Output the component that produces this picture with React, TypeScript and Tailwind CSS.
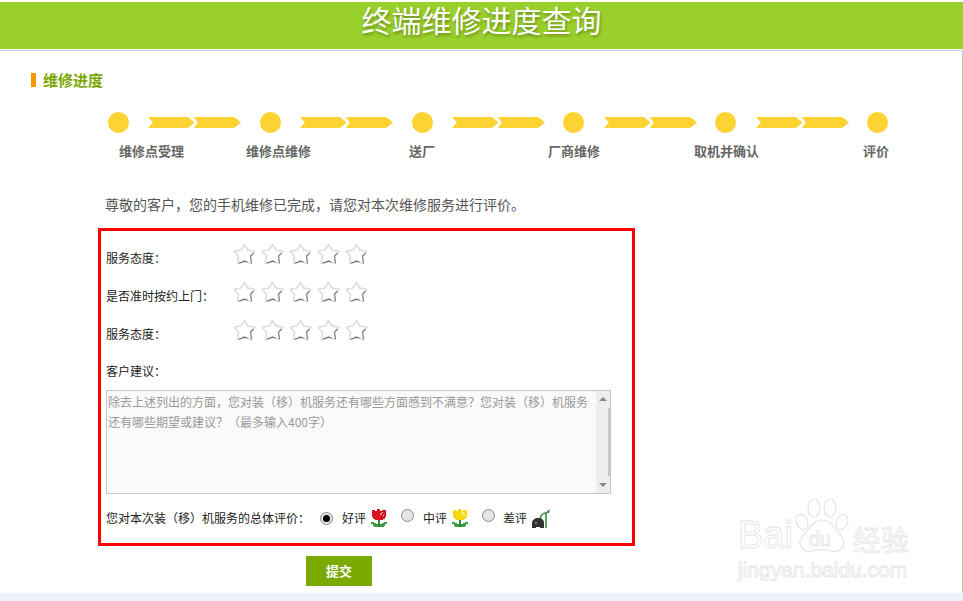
import React from 'react';

const font = "font-['Noto_Sans_CJK_SC','Liberation_Sans',sans-serif]";

const labels = [
  { text: '维修点受理', ml: 'ml-0' },
  { text: '维修点维修', ml: 'ml-[62px]' },
  { text: '送厂', ml: 'ml-[98px]' },
  { text: '厂商维修', ml: 'ml-[113px]' },
  { text: '取机并确认', ml: 'ml-[94px]' },
  { text: '评价', ml: 'ml-[104px]' },
];

function Dot() {
  return <div className="h-[21px] w-[21px] shrink-0 rounded-full bg-[#fdd233]" />;
}

function Arrows() {
  return (
    <svg width="96" height="11" viewBox="0 0 96 11" className="shrink-0">
      <polygon points="2,0 42,0 48.5,5.5 42,11 2,11 7,5.5" fill="#fdd233" />
      <polygon points="48,0 88,0 95,5.5 88,11 48,11 51.5,5.5" fill="#fdd233" />
    </svg>
  );
}

function Star() {
  return (
    <svg width="23" height="23" viewBox="0 0 23 23" className="shrink-0">
      <path
        d="M11.5 1.5 L15 7 L21.8 8.2 L17.4 13.2 L18.6 20.8 L11.5 18 L4.4 20.8 L5.6 13.2 L1.2 8.2 L8 7 Z"
        fill="#fff"
        stroke="#dcdcdc"
        strokeWidth="1.5"
        strokeLinejoin="round"
      />
      <path d="M20.6 10 L17.5 13.3 L18.6 20.4" fill="none" stroke="#858585" strokeWidth="1.2" />
      <path d="M6 20.2 L11.5 18.1 L14.5 19.2" fill="none" stroke="#707070" strokeWidth="1.2" />
    </svg>
  );
}

function StarRow({ label }: { label: string }) {
  return (
    <div className="flex h-[23px] items-center">
      <div className="w-[127px] pt-[6px] text-xs text-[#222]">{label}</div>
      <div className="flex gap-[5px]">
        <Star />
        <Star />
        <Star />
        <Star />
        <Star />
      </div>
    </div>
  );
}

function Radio({ checked }: { checked?: boolean }) {
  return (
    <span className="flex h-[13px] w-[13px] shrink-0 items-center justify-center rounded-full border border-[#8a8a8a] bg-[#e4e4e4]">
      {checked && <span className="h-[7px] w-[7px] rounded-full bg-black" />}
    </span>
  );
}

function Tulip({ color, light }: { color: string; light: string }) {
  return (
    <svg width="16" height="19" viewBox="0 0 16 19" shapeRendering="crispEdges" className="shrink-0">
      <path d="M1 1h3v1h2V0h3v2h2V1h4v7h-1v2h-2v1H4v-1H2V8H1z" fill={color} />
      <rect x="9" y="4" width="2" height="2" fill={light} />
      <rect x="11" y="3" width="1" height="1" fill="#fff" />
      <rect x="12" y="6" width="1" height="1" fill="#fff" />
      <rect x="7" y="11" width="2" height="7" fill="#2f8a38" />
      <path d="M0 13h3v1h2v1h2v3H3v-1H2v-2H0zM16 13h-3v1h-2v1H9v3h4v-1h1v-2h2z" fill="#3d9a45" />
    </svg>
  );
}

function Wilted() {
  return (
    <svg width="18" height="19" viewBox="0 0 18 19" className="shrink-0">
      <path d="M8 10 C9 6 11 4 14 4 V19" fill="none" stroke="#3d8f3f" strokeWidth="1.6" />
      <path d="M13 4 L18 0 L17 4 Z" fill="#3d8f3f" />
      <path d="M0 19 V14 C0 11 3 9 6 9 C10 9 12 11 12 14 V19 H8 V18 H4 V19 Z" fill="#333" />
      <rect x="3" y="13" width="2" height="2" fill="#777" />
    </svg>
  );
}

function Watermark() {
  return (
    <div className="absolute bottom-[12px] left-[738px] w-[176px] select-none font-['Liberation_Sans',sans-serif] text-transparent [-webkit-text-stroke:0.8px_#e4e4e4]">
      <div className="relative h-[62px]">
        <span className="absolute bottom-[5px] left-0 text-[38px] leading-none">Bai</span>
        <svg width="56" height="62" viewBox="0 0 56 62" fill="#fff" stroke="#e4e4e4" strokeWidth="1.2" className="absolute left-[56px] top-0">
          <ellipse cx="20" cy="11" rx="6" ry="9" />
          <ellipse cx="36" cy="11" rx="6" ry="9" />
          <ellipse cx="8" cy="25" rx="5.5" ry="8" transform="rotate(-25 8 25)" />
          <ellipse cx="48" cy="25" rx="5.5" ry="8" transform="rotate(25 48 25)" />
          <path d="M28 23 C38 23 42 34 48 40 C54 48 46 56 38 54 C32 52 24 52 18 54 C10 56 2 48 8 40 C14 34 18 23 28 23 Z" />
        </svg>
        <span className="absolute bottom-[10px] left-[71px] text-[20px] leading-none">du</span>
        <span className={`absolute bottom-[6px] left-[115px] ${font} text-[28px] leading-none`}>经验</span>
      </div>
      <div className="text-[21px] leading-[22px]">jingyan.baidu.com</div>
    </div>
  );
}

export default function App() {
  return (
    <div className={`flex h-[601px] w-[963px] flex-col overflow-hidden bg-white pt-[2px] ${font}`}>
      <header className="flex h-[47px] shrink-0 items-start justify-center bg-[#9ad02b]">
        <h1 className="text-[30px] leading-[35px] text-white [text-shadow:1px_2px_3px_rgba(70,90,20,0.55)]">
          终端维修进度查询
        </h1>
      </header>
      <div className="mt-px h-px shrink-0 bg-[#cfcfcf]" />

      <main className="relative flex-1 border-r border-[#c4c4c4]">
        <div className="ml-[31px] mt-[19px] flex h-[20px] items-center">
          <span className="h-[14px] w-[5px] bg-[#ff9600]" />
          <h2 className="ml-[7px] text-[15px] font-bold text-[#7aa800]">维修进度</h2>
        </div>

        <div className="ml-[108px] mt-[22px] flex w-[780px] items-center justify-between">
          <Dot />
          <Arrows />
          <Dot />
          <Arrows />
          <Dot />
          <Arrows />
          <Dot />
          <Arrows />
          <Dot />
          <Arrows />
          <Dot />
        </div>

        <div className="ml-[119px] mt-[9px] flex h-[16px] items-center text-[13px] font-bold leading-none text-[#666]">
          {labels.map((l) => (
            <span key={l.text} className={l.ml}>
              {l.text}
            </span>
          ))}
        </div>

        <p className="ml-[105px] mt-[36px] text-sm leading-[20px] text-[#555]">
          尊敬的客户，您的手机维修已完成，请您对本次维修服务进行评价。
        </p>

        <form className="ml-[98px] mt-[14px] h-[318px] w-[537px] border-[3px] border-[#ff0000] pl-[5px] pt-[12px]">
          <div className="flex flex-col gap-[15px]">
            <StarRow label="服务态度：" />
            <StarRow label="是否准时按约上门：" />
            <StarRow label="服务态度：" />
          </div>

          <div className="mt-[21px] text-xs leading-[16px] text-[#222]">客户建议：</div>

          <div className="mt-[11px] flex h-[104px] w-[505px] border border-[#c6c6c6] bg-[#fafafa]">
            <textarea
              className="min-w-0 flex-1 resize-none bg-transparent pl-[1px] pt-[1px] text-xs leading-[20px] outline-none placeholder:text-[#999]"
              placeholder="除去上述列出的方面，您对装（移）机服务还有哪些方面感到不满意？您对装（移）机服务还有哪些期望或建议？（最多输入400字）"
            />
            <div className="flex w-[14px] shrink-0 flex-col items-center bg-[#ededed] py-[6px]">
              <span className="h-0 w-0 border-x-[4px] border-b-[4px] border-x-transparent border-b-[#888]" />
              <span className="my-[7px] w-full flex-1 border-r-2 border-[#c8c8c8]" />
              <span className="h-0 w-0 border-x-[4px] border-t-[4px] border-x-transparent border-t-[#888]" />
            </div>
          </div>

          <div className="mt-[12px] flex h-[24px] items-center text-xs text-[#222]">
            <span className="w-[214px]">您对本次装（移）机服务的总体评价：</span>
            <Radio checked />
            <span className="ml-[9px]">好评</span>
            <span className="ml-[5px]">
              <Tulip color="#d8141e" light="#ff8a8a" />
            </span>
            <span className="mb-[6px] ml-[14px]">
              <Radio />
            </span>
            <span className="ml-[9px]">中评</span>
            <span className="ml-[5px]">
              <Tulip color="#f5d80f" light="#fff48a" />
            </span>
            <span className="mb-[6px] ml-[14px]">
              <Radio />
            </span>
            <span className="ml-[8px]">差评</span>
            <span className="ml-[5px]">
              <Wilted />
            </span>
          </div>
        </form>

        <button
          type="button"
          className="ml-[306px] mt-[10px] block h-[30px] w-[66px] bg-[#7aa900] text-[13px] font-bold text-white"
        >
          提交
        </button>

        <Watermark />
      </main>

      <div className="h-[8px] shrink-0 bg-[#eef2fb]" />
    </div>
  );
}
